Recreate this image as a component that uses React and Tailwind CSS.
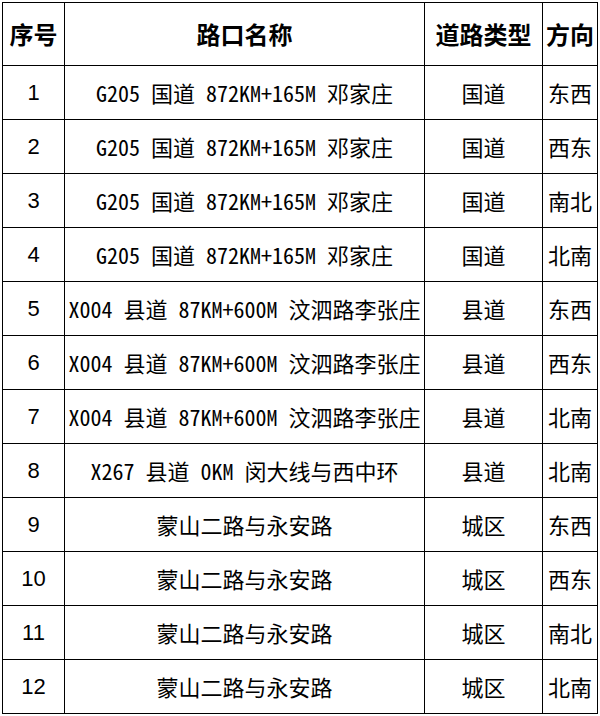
import React from "react";

const rows = [
  ["1", "G205 国道 872KM+165M 邓家庄", "国道", "东西"],
  ["2", "G205 国道 872KM+165M 邓家庄", "国道", "西东"],
  ["3", "G205 国道 872KM+165M 邓家庄", "国道", "南北"],
  ["4", "G205 国道 872KM+165M 邓家庄", "国道", "北南"],
  ["5", "X004 县道 87KM+600M 汶泗路李张庄", "县道", "东西"],
  ["6", "X004 县道 87KM+600M 汶泗路李张庄", "县道", "西东"],
  ["7", "X004 县道 87KM+600M 汶泗路李张庄", "县道", "北南"],
  ["8", "X267 县道 0KM 闵大线与西中环", "县道", "北南"],
  ["9", "蒙山二路与永安路", "城区", "东西"],
  ["10", "蒙山二路与永安路", "城区", "西东"],
  ["11", "蒙山二路与永安路", "城区", "南北"],
  ["12", "蒙山二路与永安路", "城区", "北南"],
];

const mono = { fontFamily: '"Noto Sans Mono CJK SC", "Noto Sans CJK SC", monospace' };

export default function App() {
  return (
    <div className="w-[600px] h-[716px] bg-white pl-[2px] pt-[2px] overflow-hidden">
      <table className="table-fixed border-collapse w-[595px] text-black">
        <colgroup>
          <col className="w-[62px]" />
          <col className="w-[360px]" />
          <col className="w-[118px]" />
          <col className="w-[55px]" />
        </colgroup>
        <thead>
          <tr className="h-[63px] font-['Noto_Sans_CJK_SC',sans-serif] font-bold text-[24px]">
            <th className="border-[1.5px] border-black p-0 text-center">序号</th>
            <th className="border-[1.5px] border-black p-0 text-center">路口名称</th>
            <th className="border-[1.5px] border-black p-0 text-center">道路类型</th>
            <th className="border-[1.5px] border-black p-0 text-center">方向</th>
          </tr>
        </thead>
        <tbody>
          {rows.map((r) => (
            <tr key={r[0]} className="h-[54px]">
              <td className="border-[1.5px] border-black p-0 text-center font-['Liberation_Sans',sans-serif] text-[22px]">{r[0]}</td>
              <td className="border-[1.5px] border-black p-0 text-center text-[22px] whitespace-nowrap" style={mono}>{r[1]}</td>
              <td className="border-[1.5px] border-black p-0 text-center text-[22px]" style={mono}>{r[2]}</td>
              <td className="border-[1.5px] border-black p-0 text-center text-[22px]" style={mono}>{r[3]}</td>
            </tr>
          ))}
        </tbody>
      </table>
    </div>
  );
}
